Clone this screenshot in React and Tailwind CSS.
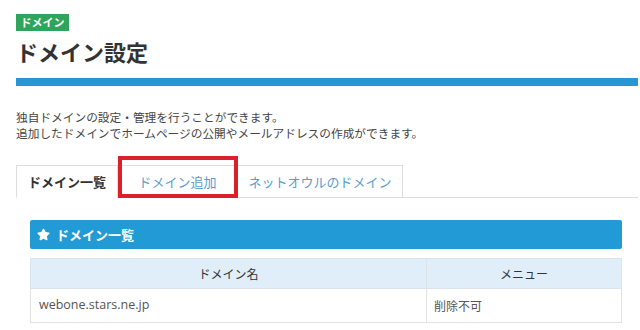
import { FaStar } from "react-icons/fa";

const tabs = [
  { label: "ドメイン一覧", width: "w-[102px]", active: true },
  { label: "ドメイン追加", width: "w-[120px]" },
  { label: "ネットオウルのドメイン", width: "w-[165px]" },
];

const App = () => {
  return (
    <div className="min-h-screen bg-white pl-4 pr-[2px] pt-[14px] font-['Noto_Sans_CJK_JP',sans-serif] text-[#333]">
      {/* page title */}
      <div className="flex h-[17px] w-[53px] items-center justify-center bg-[#2ea55b] text-[11px] font-bold leading-none text-white">
        ドメイン
      </div>
      <h1 className="mt-[5px] h-[30px] text-[22px] font-bold leading-[30px] text-[#333]">
        ドメイン設定
      </h1>
      <div className="mt-[12px] h-[8px] bg-[#2497d4]" />

      <p className="mt-[23px] text-[11.7px] leading-[16px] text-[#444]">
        独自ドメインの設定・管理を行うことができます。
        <br />
        追加したドメインでホームページの公開やメールアドレスの作成ができます。
      </p>

      {/* tabs */}
      <div className="relative mt-[24px] flex border-b border-[#ddd]">
        {tabs.map((tab) => (
          <div
            key={tab.label}
            className={
              tab.active
                ? `-mb-px flex h-[33px] ${tab.width} items-center justify-center border border-b-white border-[#ddd] bg-white text-[13px] font-bold text-[#333]`
                : `-mb-px flex h-[33px] ${tab.width} items-center justify-center border border-[#ddd] border-l-0 bg-white text-[13px] text-[#5b9ccb]`
            }
          >
            {tab.label}
          </div>
        ))}
        {/* annotation */}
        <div className="absolute left-[102px] top-[-9px] h-[42px] w-[120px] border-[4px] border-[#d9202b]" />
      </div>

      {/* domain list */}
      <section className="px-[14px] pr-[16px]">
        <div className="mt-[22px] flex h-[29px] items-center gap-[6px] rounded-[2px] bg-[#229ad6] pl-[7px] text-[13px] font-bold text-white">
          <FaStar className="h-[13px] w-[13px]" />
          <span>ドメイン一覧</span>
        </div>

        <table className="mt-[9px] w-full border-collapse text-[12px]">
          <thead>
            <tr className="h-[30px] bg-[#dfeef9]">
              <th className="border border-[#dde3e8] font-normal text-[#333]">ドメイン名</th>
              <th className="w-[195px] border border-[#dde3e8] font-normal text-[#333]">メニュー</th>
            </tr>
          </thead>
          <tbody>
            <tr className="h-[34px]">
              <td className="border border-[#e2e2e2] pl-[8px] font-['Open_Sans',sans-serif] text-[12.5px] text-[#555]">
                webone.stars.ne.jp
              </td>
              <td className="border border-[#e2e2e2] pl-[7px] text-[#555]">削除不可</td>
            </tr>
          </tbody>
        </table>
      </section>
    </div>
  );
};

export default App;
